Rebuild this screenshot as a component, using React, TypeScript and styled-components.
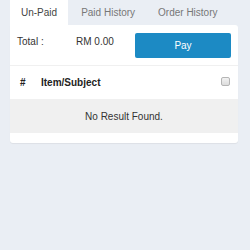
import React from "react";
import styled, { createGlobalStyle } from "styled-components";

const Global = createGlobalStyle`
  html, body { margin: 0; padding: 0; background: #eaeef4; }
  body { font-family: "Liberation Sans", Arial, sans-serif; color: #333; }
  * { box-sizing: border-box; }
`;

const Page = styled.div`
  width: 250px;
  height: 250px;
  padding: 0 12px 0 10px;
  background: #eaeef4;
`;

const Tabs = styled.div`
  display: flex;
  height: 25px;
`;

const Tab = styled.div<{ $active?: boolean }>`
  padding: 0 11px;
  display: flex;
  align-items: center;
  font-size: 10px;
  color: ${(p) => (p.$active ? "#444" : "#777")};
  background: ${(p) => (p.$active ? "#fff" : "transparent")};
  margin-right: ${(p) => (p.$active ? "2px" : "1px")};
`;

const Card = styled.div`
  background: #fff;
  border-radius: 0 3px 3px 3px;
  box-shadow: 0 1px 1px rgba(0, 0, 0, 0.06);
  padding-bottom: 10px;
`;

const TotalRow = styled.div`
  display: flex;
  align-items: flex-start;
  padding: 8px 7px 7px 7px;
  border-bottom: 1px solid #f0f0f0;
  font-size: 10px;
`;

const Label = styled.div`
  width: 59px;
  padding-top: 3px;
`;

const Amount = styled.div`
  flex: 1;
  padding-top: 3px;
`;

const PayButton = styled.button`
  width: 96px;
  height: 25px;
  border: none;
  border-radius: 2px;
  background: #1c8ac4;
  color: #fff;
  font-family: "Liberation Sans", Arial, sans-serif;
  font-size: 10px;
  padding: 0;
`;

const HeaderRow = styled.div`
  display: flex;
  align-items: center;
  height: 33px;
  padding: 0 8px 0 10px;
  font-size: 10px;
  font-weight: bold;
  color: #222;
`;

const Hash = styled.div`
  width: 21px;
`;

const Subject = styled.div`
  flex: 1;
`;

const CheckBox = styled.div`
  width: 9px;
  height: 9px;
  border: 1px solid #b5b5b5;
  border-radius: 2px;
  background: linear-gradient(#f2f2f2, #dcdcdc);
  margin-bottom: 3px;
`;

const EmptyRow = styled.div`
  height: 34px;
  background: #f0f0f0;
  display: flex;
  align-items: center;
  justify-content: center;
  font-size: 10px;
  color: #333;
`;

export default function App() {
  return (
    <>
      <Global />
      <Page>
        <Tabs>
          <Tab $active>Un-Paid</Tab>
          <Tab>Paid History</Tab>
          <Tab>Order History</Tab>
        </Tabs>
        <Card>
          <TotalRow>
            <Label>Total :</Label>
            <Amount>RM 0.00</Amount>
            <PayButton>Pay</PayButton>
          </TotalRow>
          <HeaderRow>
            <Hash>#</Hash>
            <Subject>Item/Subject</Subject>
            <CheckBox />
          </HeaderRow>
          <EmptyRow>No Result Found.</EmptyRow>
        </Card>
      </Page>
    </>
  );
}
